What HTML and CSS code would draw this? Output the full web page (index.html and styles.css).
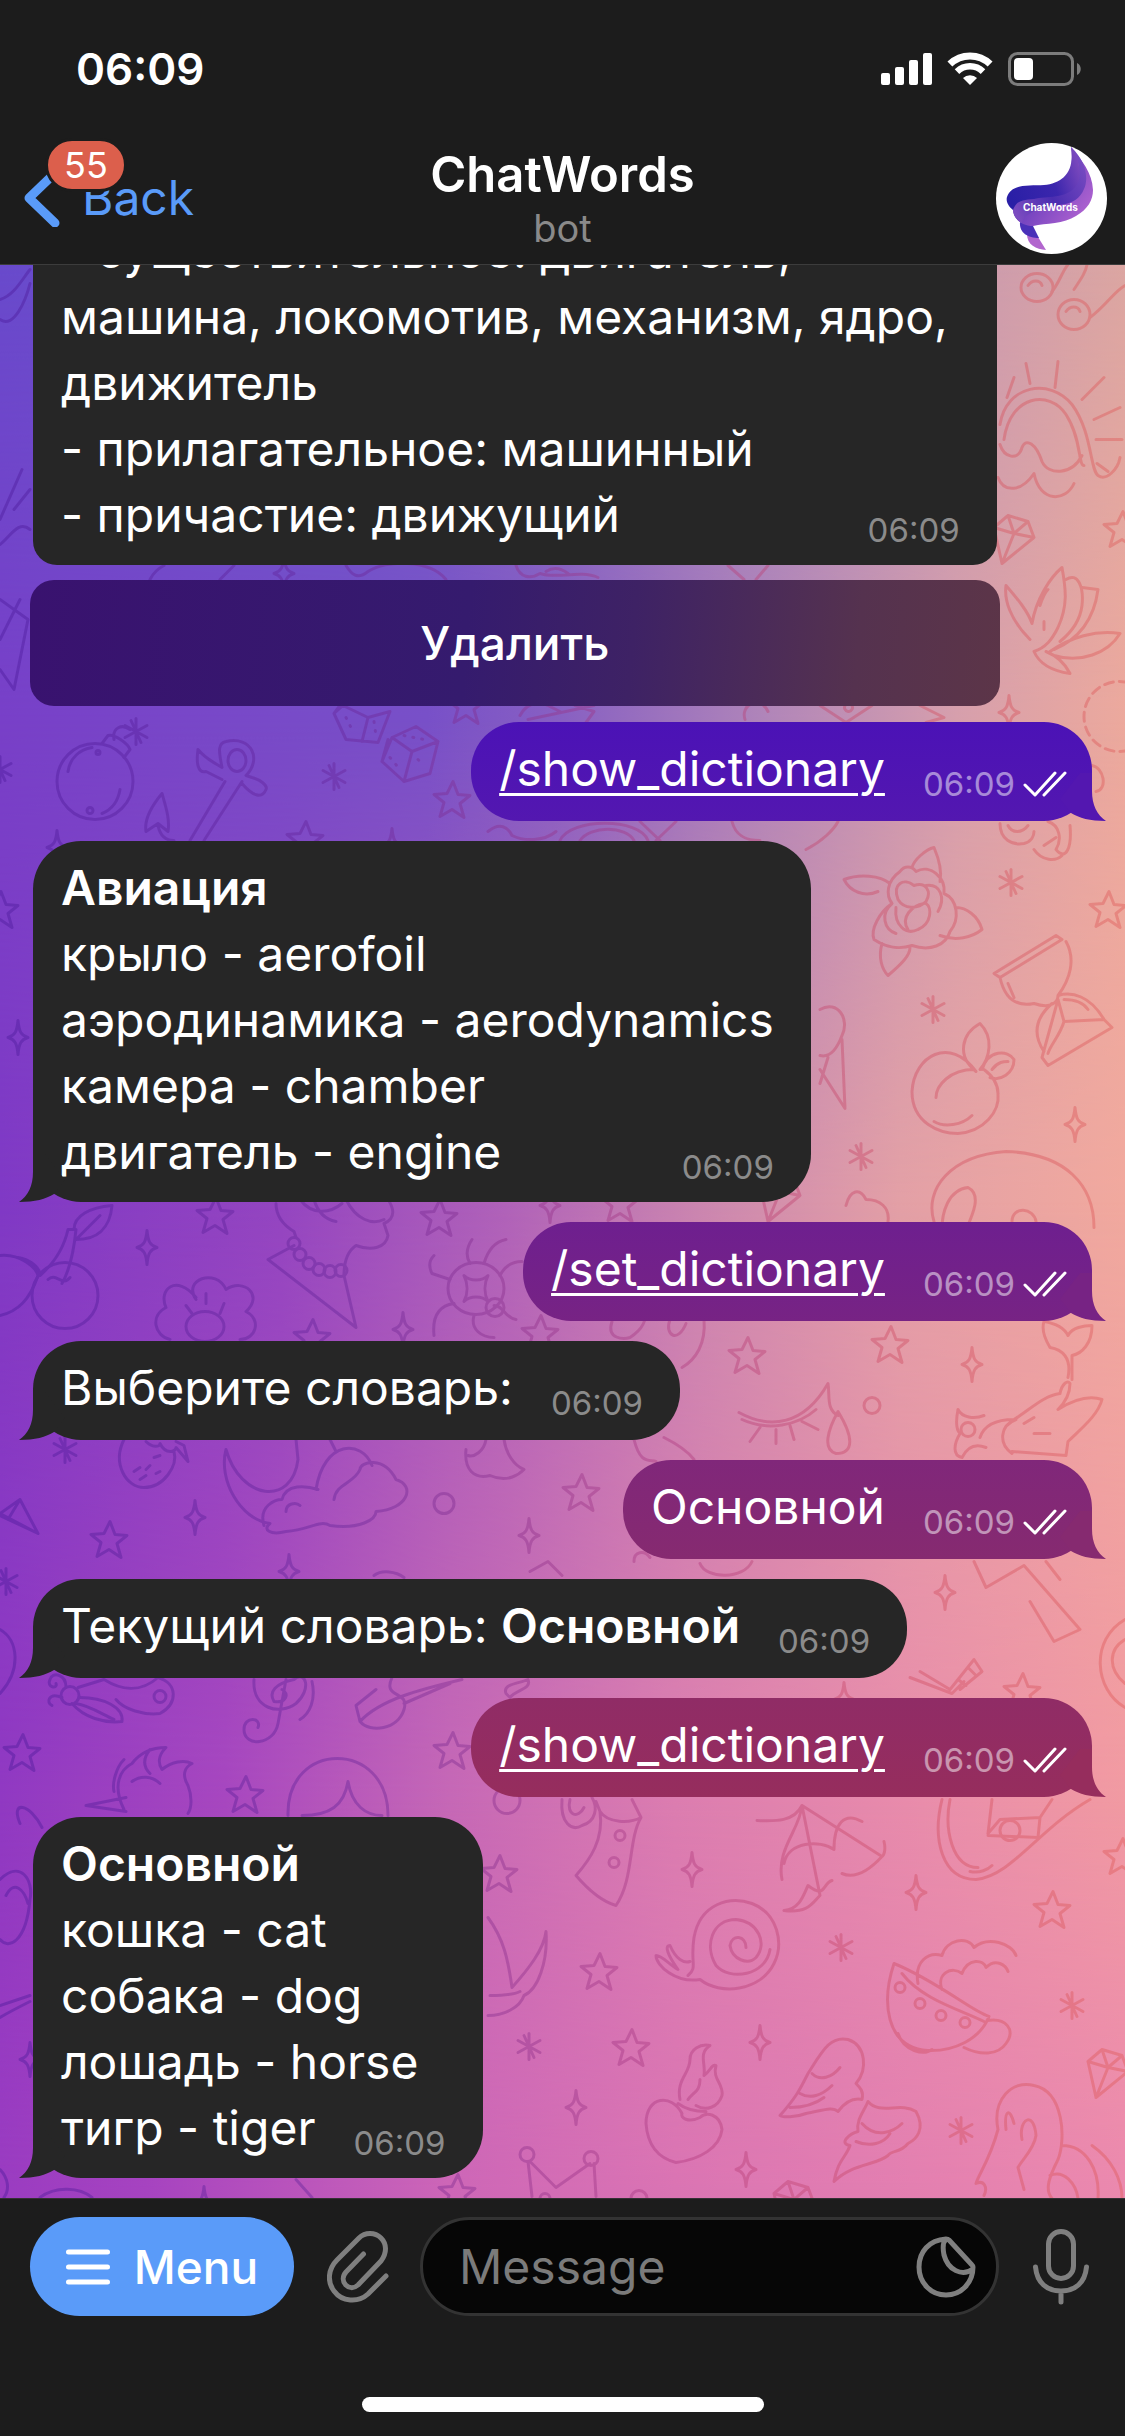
FILE: index.html
```html
<!DOCTYPE html>
<html lang="ru">
<head>
<meta charset="utf-8">
<meta name="viewport" content="width=device-width, initial-scale=1">
<title>ChatWords</title>
<link rel="stylesheet" href="styles.css">
</head>
<body>
<svg class="defs" width="0" height="0" aria-hidden="true">
  <defs>
    <symbol id="tail-right" viewBox="0 0 46 48"><path d="M20 0H32V18C32 32 37 42 46 48C30 48 19 45 11 40L0 26Z"/></symbol>
    <symbol id="tail-left" viewBox="0 0 46 48"><path d="M26 0H14V18C14 32 9 42 0 48C16 48 27 45 35 40L46 26Z"/></symbol>
    <symbol id="checks" viewBox="0 0 44 26"><path d="M2 14L12 24L32 2M21 24L42 2" fill="none" stroke="#fff" stroke-width="3" stroke-linecap="round" stroke-linejoin="round"/></symbol>
  </defs>
</svg>

<header class="top">
  <div class="status">
    <span class="clock">06:09</span>
    <div class="indicators">
      <svg width="51" height="32" viewBox="0 0 51 32" fill="#fff" aria-hidden="true">
        <rect x="0" y="20" width="9" height="12" rx="2"/><rect x="14" y="14" width="9" height="18" rx="2"/><rect x="28" y="7" width="9" height="25" rx="2"/><rect x="42" y="0" width="9" height="32" rx="2"/>
      </svg>
      <svg width="46" height="34" viewBox="0 0 46 34" fill="none" stroke="#fff" aria-hidden="true">
        <path d="M2.9 12.1A29 29 0 0 1 43.1 12.1" stroke-width="7"/><path d="M10 19.6A18.7 18.7 0 0 1 36 19.6" stroke-width="6.5"/><path d="M23 33L16 26A10 10 0 0 1 30 26Z" fill="#fff" stroke="none"/>
      </svg>
      <svg width="74" height="34" viewBox="0 0 74 34" aria-hidden="true">
        <rect x="1.5" y="1.5" width="63" height="31" rx="8" fill="none" stroke="#7c7c7c" stroke-width="3"/><rect x="6" y="6" width="19" height="22" rx="4" fill="#fff"/><path d="M69 11C74 13 74 21 69 23Z" fill="#7c7c7c"/>
      </svg>
    </div>
  </div>
  <div class="nav">
    <a class="back" href="#">
      <svg width="38" height="58" viewBox="0 0 38 58" fill="none" stroke="#5a9bf9" stroke-width="9" stroke-linecap="round" stroke-linejoin="round" aria-hidden="true"><path d="M31 4L5 29L31 54"/></svg>
      <span>Back</span>
      <b class="badge">55</b>
    </a>
    <div class="peer"><h1>ChatWords</h1><p>bot</p></div>
    <button class="avatar" aria-label="ChatWords">
      <svg width="111" height="111" viewBox="0 0 111 111" aria-hidden="true">
        <defs>
          <linearGradient id="av1" x1="0" y1=".6" x2="1" y2=".3"><stop offset="0" stop-color="#2a1fa6"/><stop offset=".6" stop-color="#3b26ad"/><stop offset="1" stop-color="#7a48bd"/></linearGradient>
          <linearGradient id="av2" x1="0" y1=".8" x2="1" y2=".2"><stop offset="0" stop-color="#7b4bc0"/><stop offset=".45" stop-color="#4a2db0"/><stop offset="1" stop-color="#7a4cc2"/></linearGradient>
          <linearGradient id="av3" x1="0" y1=".3" x2="1" y2="1"><stop offset="0" stop-color="#4a2eb4"/><stop offset="1" stop-color="#bd6ad4"/></linearGradient>
        </defs>
        <circle cx="55.500" cy="55.500" r="55.500" fill="#fff"/>
        <path d="M31 91C31 102 40 106 50 107L42 94Z" fill="#b266ce"/>
        <path d="M24 79C23 90 32 95 43 95L37 83Z" fill="#4a30b8"/>
        <path d="M17 66C17 76 26 83 37 83C50 80 68 81 80 73C92 66 97 57 97 47C96 29 86 18 75 4C79 28 70 44 50 52C34 56 20 56 17 66Z" fill="url(#av3)"/>
        <path d="M17 67C19 54 33 54 45 53C68 50 82 44 83 22L75 4C92 20 92 38 88 46C80 66 58 60 44 66C33 70 27 74 26 80C20 77 17 72 17 67Z" fill="url(#av2)"/>
        <path d="M17 67C11 62 10 57 11 54C16 40 34 43 48 42C66 40 79 30 75 4C85 18 86 36 80 43C71 56 50 53 38 56C26 57 20 58 17 67Z" fill="url(#av1)"/>
        <text x="27" y="68" class="logo-text">ChatWords</text>
      </svg>
    </button>
  </div>
</header>

<main class="chat">
  <svg class="wallpaper" viewBox="0 265 1125 1934" preserveAspectRatio="xMidYMid slice" aria-hidden="true">
    <defs>
      <linearGradient id="r0"><stop offset="0" stop-color="#694acc"/><stop offset=".3" stop-color="#6a58ca"/><stop offset=".5" stop-color="#8a68c2"/><stop offset=".75" stop-color="#b78fb8"/><stop offset=".89" stop-color="#cf9dac"/><stop offset="1" stop-color="#dca6a2"/></linearGradient>
      <linearGradient id="r1"><stop offset="0" stop-color="#7840c8"/><stop offset=".38" stop-color="#7850c8"/><stop offset=".5" stop-color="#8860c2"/><stop offset=".68" stop-color="#b085b9"/><stop offset=".85" stop-color="#d69fac"/><stop offset="1" stop-color="#eca99d"/></linearGradient>
      <linearGradient id="r2"><stop offset="0" stop-color="#8039c5"/><stop offset=".25" stop-color="#9445c1"/><stop offset=".45" stop-color="#b062b9"/><stop offset=".62" stop-color="#cb86b0"/><stop offset=".8" stop-color="#e3a0a6"/><stop offset="1" stop-color="#f1a99e"/></linearGradient>
      <linearGradient id="r3"><stop offset="0" stop-color="#9039c2"/><stop offset=".2" stop-color="#a747bf"/><stop offset=".4" stop-color="#c668b6"/><stop offset=".6" stop-color="#dc7db0"/><stop offset=".82" stop-color="#e98dab"/><stop offset="1" stop-color="#f19aa2"/></linearGradient>
      <linearGradient id="r4"><stop offset="0" stop-color="#9a3cc1"/><stop offset=".13" stop-color="#a643c0"/><stop offset=".4" stop-color="#cd66b7"/><stop offset=".6" stop-color="#da74b3"/><stop offset="1" stop-color="#eb89ae"/></linearGradient>
      <linearGradient id="v1" gradientUnits="userSpaceOnUse" x1="0" x2="0" y1="265" y2="720"><stop offset="0" stop-color="#000"/><stop offset="1" stop-color="#fff"/></linearGradient>
      <linearGradient id="v2" gradientUnits="userSpaceOnUse" x1="0" x2="0" y1="720" y2="1200"><stop offset="0" stop-color="#000"/><stop offset="1" stop-color="#fff"/></linearGradient>
      <linearGradient id="v3" gradientUnits="userSpaceOnUse" x1="0" x2="0" y1="1200" y2="1800"><stop offset="0" stop-color="#000"/><stop offset="1" stop-color="#fff"/></linearGradient>
      <linearGradient id="v4" gradientUnits="userSpaceOnUse" x1="0" x2="0" y1="1800" y2="2190"><stop offset="0" stop-color="#000"/><stop offset="1" stop-color="#fff"/></linearGradient>
      <g id="area"><rect y="265" width="1125" height="1934"/></g>
      <mask id="m1"><use href="#area" fill="url(#v1)"/></mask>
      <mask id="m2"><use href="#area" fill="url(#v2)"/></mask>
      <mask id="m3"><use href="#area" fill="url(#v3)"/></mask>
      <mask id="m4"><use href="#area" fill="url(#v4)"/></mask>
      <linearGradient id="ink"><stop offset="0" stop-color="#4c1a9c"/><stop offset=".3" stop-color="#66259a"/><stop offset=".6" stop-color="#b03a80"/><stop offset=".8" stop-color="#d04c62"/><stop offset="1" stop-color="#e05a58"/></linearGradient>
      <path id="st" d="M1 -18L6 -5L18 -4L8 4L12 18L0 10L-12 17L-8 3L-18 -5L-5 -6Z"/>
      <path id="sp" d="M0 -17C1 -6 3 -2 10 0C3 2 1 6 0 17C-1 6 -3 2 -10 0C-3 -2 -1 -6 0 -17Z"/>
      <path id="as" d="M0 -13V13M-11 -6L11 6M-11 6L11 -6M-5 -11L5 11"/>
      <path id="gem" d="M-20 -12L-6 -24L14 -18L20 -2L-12 24ZM-20 -12L0 -6L20 -2M-6 -24L0 -6L-12 24M14 -18L0 -6"/>
      <mask id="doodles" maskUnits="userSpaceOnUse" x="0" y="265" width="1125" height="1934">
        <g fill="none" stroke="#fff" stroke-width="3" stroke-linejoin="round" stroke-linecap="round">
          <use href="#st" x="452" y="800"/><use href="#st" x="1108" y="910"/><use href="#st" x="305" y="840"/><use href="#st" x="466" y="706"/>
          <use href="#st" x="215" y="1216"/><use href="#st" x="439" y="1218"/><use href="#st" x="620" y="1204"/><use href="#st" x="312" y="1338"/><use href="#st" x="747" y="1356"/><use href="#st" x="890" y="1345"/><use href="#st" x="540" y="1334"/><use href="#st" x="581" y="1493"/><use href="#st" x="109" y="1540"/><use href="#st" x="22" y="1753"/><use href="#st" x="245" y="1795"/><use href="#st" x="452" y="1751"/><use href="#st" x="1022" y="1692"/><use href="#st" x="499" y="1874"/><use href="#st" x="599" y="1972"/><use href="#st" x="631" y="2048"/><use href="#st" x="1052" y="1910"/><use href="#st" x="457" y="2193"/><use href="#st" x="1122" y="1857"/><use href="#st" x="0" y="910"/><use href="#st" x="1122" y="530"/>
          <use href="#sp" x="18" y="1038"/><use href="#sp" x="1075" y="1125"/><use href="#sp" x="57" y="848"/><use href="#sp" x="1009" y="713"/><use href="#sp" x="147" y="1248"/><use href="#sp" x="550" y="1206"/><use href="#sp" x="403" y="1330"/><use href="#sp" x="972" y="1365"/><use href="#sp" x="195" y="1518"/><use href="#sp" x="529" y="1536"/><use href="#sp" x="945" y="1593"/><use href="#sp" x="289" y="1572"/><use href="#sp" x="692" y="1870"/><use href="#sp" x="916" y="1893"/><use href="#sp" x="760" y="2043"/><use href="#sp" x="576" y="2108"/><use href="#sp" x="746" y="2170"/><use href="#sp" x="204" y="2204"/><use href="#sp" x="284" y="574"/><use href="#sp" x="844" y="1700"/><use href="#sp" x="30" y="2060"/><use href="#sp" x="392" y="846"/>
          <use href="#as" x="334" y="777"/><use href="#as" x="1011" y="883"/><use href="#as" x="933" y="1010"/><use href="#as" x="861" y="1157"/><use href="#as" x="0" y="770"/><use href="#as" x="136" y="732"/><use href="#as" x="65" y="1450"/><use href="#as" x="6" y="1582"/><use href="#as" x="841" y="1948"/><use href="#as" x="529" y="2047"/><use href="#as" x="1072" y="2006"/><use href="#as" x="961" y="2131"/>
          <use href="#gem" x="1014" y="540"/><use href="#gem" x="1108" y="2074"/><use href="#gem" x="780" y="1198"/><use href="#gem" x="794" y="2206"/>
          <circle cx="444" cy="1504" r="10"/><circle cx="872" cy="1406" r="8"/><circle cx="507" cy="1801" r="13"/>
          <!-- sun behind a cloud, notes -->
          <path d="M1000 425C1006 385 1050 378 1072 405C1092 432 1090 470 1098 476C1106 482 1118 470 1120 458M1004 440C1010 395 1050 390 1066 415C1082 440 1078 466 1084 466M1007 398L1014 378M1055 388L1058 362M1082 400L1104 378M1094 420L1120 408M1096 440L1122 440M1097 464L1108 472M1030 384L1026 364M1000 445C1004 458 1018 462 1022 448C1026 438 1036 444 1042 462C1048 476 1072 476 1082 456M998 478C1004 494 1022 492 1034 474C1040 504 1066 502 1074 484"/>
          <ellipse cx="1037" cy="288" rx="16" ry="14"/><ellipse cx="1074" cy="315" rx="16" ry="15"/><path d="M1028 286C1032 280 1040 280 1042 286M1066 312C1070 306 1078 306 1080 312M1052 292C1060 282 1062 272 1068 265M1090 318C1106 306 1116 290 1125 286M1074 290C1082 278 1086 272 1087 265"/>
          <!-- lotus -->
          <path d="M1030 640C1010 620 1004 600 1006 586C1018 600 1028 612 1032 624C1036 600 1050 578 1062 568C1066 590 1068 606 1058 628C1052 640 1046 648 1034 652M1066 580C1078 572 1084 588 1082 606C1080 622 1070 634 1060 642M1082 588L1098 590C1094 620 1078 640 1054 650M1050 652C1070 638 1096 630 1120 634C1108 654 1080 664 1054 656M1034 652C1040 666 1056 672 1070 674C1064 662 1056 656 1046 652M1040 606C1042 600 1044 594 1048 590M1044 622V630"/>
          <circle cx="1119" cy="717" r="35" stroke-dasharray="9 6"/>
          <path d="M1092 766C1104 768 1108 790 1096 792M1000 824C1000 840 1012 846 1024 844C1032 842 1034 836 1034 832M1008 826C1012 834 1022 834 1028 826M1048 822C1060 826 1062 840 1056 850C1066 862 1072 848 1070 826M1044 846L1056 838M1034 850C1042 862 1056 862 1062 856"/>
          <!-- shapes between the first message and its button -->
          <path d="M150 580C154 572 160 568 164 566M220 580L234 566M346 566C352 576 358 580 368 572C386 560 430 560 446 580M516 566C520 578 530 580 540 574C556 580 580 570 598 578M546 572C552 568 560 568 568 574M728 566L744 580M756 580L768 566"/>
          <path d="M0 300C14 296 22 280 30 270M0 320C14 330 26 300 30 284M0 520L22 470M14 510L30 490M0 545C10 538 18 520 30 530M0 600L28 620L14 690L0 670M0 640L20 600"/>
          <path d="M520 716C526 704 540 700 548 706L560 712M528 720L594 706M575 706L594 712L586 723M745 720C740 705 760 695 768 712M820 706L846 723L872 706M920 706L944 718L926 723M848 712A4 4 0 1 1 849 712"/>
          <!-- bomb -->
          <circle cx="95" cy="782" r="38"/><path d="M102 744L108 736C114 734 128 744 130 750L124 758M114 740C112 728 122 724 130 730M68 772C70 758 80 750 92 748M102 814C112 810 118 802 120 790"/><circle cx="98" cy="753" r="2"/><circle cx="90" cy="811" r="3"/>
          <!-- anchor -->
          <path d="M225 782L190 841M242 782L204 841M198 750C206 760 216 764 222 768C220 756 216 744 226 742C252 736 262 760 246 776L252 778C260 780 268 786 266 790C262 800 252 796 242 784M198 750C196 764 198 774 206 772L222 780M162 794C152 806 144 820 146 832L158 824L168 832C170 820 166 808 162 794ZM158 826C160 836 166 841 174 841"/><ellipse cx="237" cy="761" rx="9" ry="11"/>
          <!-- dice -->
          <path d="M343 706L368 718L390 712L378 743L346 740L334 714ZM368 718L362 742M340 706L334 714M392 738L416 727L438 742L430 774L404 782L382 762ZM392 738L412 752L438 742M412 752L404 782M382 762L388 740"/><g stroke-dasharray="1 8"><path d="M346 718L354 734M374 722L376 736M390 758L400 770M418 760L424 766M404 736L424 740"/></g>
          <path d="M488 832C500 822 508 828 512 836C524 842 544 842 556 832M560 841C570 818 640 818 648 841M580 841C590 826 626 826 634 841M640 822L660 841M676 822L656 841M732 822C736 838 748 841 760 841M806 850C822 842 834 830 838 822"/>
          <!-- rose -->
          <path d="M900 872C886 882 886 896 892 904C880 912 870 930 874 940C886 948 900 950 912 946C930 952 946 946 950 932C960 920 958 900 944 894C946 878 930 864 916 872C912 866 904 866 900 872ZM898 900C892 884 904 878 914 886C926 882 932 892 926 902C918 910 904 910 898 900ZM896 908C894 926 906 936 918 930C932 924 932 908 926 904M908 930C900 918 912 906 924 904M892 904C880 914 884 930 896 934M926 886C940 884 946 898 938 912M878 892C864 898 850 892 844 880C860 874 880 876 890 884M912 868C914 860 926 850 934 848C940 862 942 872 940 882M940 936C956 942 972 938 982 930C978 916 966 908 956 908M882 944C878 958 882 970 888 976C902 964 910 956 910 948"/>
          <!-- hourglass -->
          <path d="M1056 936L1062 940L1000 978L994 974ZM1000 978C1004 996 1014 1008 1034 1004C1052 1010 1058 1002 1058 996C1070 980 1076 960 1066 942M1058 996C1072 992 1090 996 1104 1020M1052 1004C1036 1018 1032 1034 1044 1052M1058 1000L1064 1022L1104 1020L1112 1028L1048 1066L1042 1058ZM1064 1022C1060 1036 1050 1046 1048 1054M1064 1000C1076 1000 1084 1004 1088 1010M1008 984L1014 998"/>
          <!-- peach -->
          <path d="M976 1072C950 1036 914 1056 912 1092C912 1124 940 1134 958 1134C984 1132 1000 1112 998 1094C998 1084 992 1076 984 1070M974 1070C950 1070 936 1086 936 1098M976 1072C956 1056 962 1034 980 1024C994 1038 990 1058 980 1070M982 1070C988 1050 1008 1050 1014 1060C1014 1074 1000 1082 990 1078M992 1070C998 1062 1004 1062 1008 1062M934 1122C944 1128 962 1126 972 1116"/>
          <path d="M820 1010C838 1000 850 1020 842 1036C836 1052 828 1058 820 1056M828 1058L820 1084M842 1040L845 1109L820 1070"/>
          <path d="M934 1222C924 1190 950 1156 1006 1152C1066 1154 1094 1186 1094 1228M942 1240C940 1210 950 1190 968 1188C984 1196 970 1220 962 1240M846 1206C850 1190 860 1188 866 1200C880 1200 890 1208 888 1222M1012 1222C1012 1206 1034 1208 1036 1222"/>
          <!-- cherries -->
          <circle cx="65" cy="1296" r="33"/><path d="M48 1280C56 1272 62 1288 70 1278M0 1256C20 1254 36 1268 38 1276C30 1300 18 1312 0 1316M18 1258C30 1260 40 1268 40 1276C56 1262 64 1248 68 1230L76 1230C74 1250 70 1270 62 1284M74 1230C74 1216 90 1208 112 1206C110 1230 96 1240 76 1240L100 1216"/>
          <!-- flower -->
          <ellipse cx="205" cy="1327" rx="19" ry="15"/><path d="M196 1300C182 1280 216 1268 226 1290C244 1278 264 1296 246 1312C262 1320 256 1340 240 1340M196 1298C176 1274 158 1290 166 1308C150 1316 154 1336 170 1340M206 1294V1304M186 1306L192 1314M224 1304L220 1314"/>
          <!-- portrait bust -->
          <path d="M276 1204C276 1218 284 1226 294 1232L296 1238M300 1200C312 1216 330 1214 342 1204M314 1200C318 1214 326 1220 336 1222M346 1200C356 1220 372 1226 384 1220M294 1246L268 1260L356 1328L344 1276C344 1258 350 1250 356 1246C372 1252 386 1248 388 1236L384 1224C398 1218 392 1206 388 1200"/><g><circle cx="294" cy="1244" r="6"/><circle cx="300" cy="1255" r="6"/><circle cx="309" cy="1264" r="6"/><circle cx="319" cy="1270" r="6"/><circle cx="330" cy="1272" r="6"/><circle cx="341" cy="1271" r="6"/></g>
          <!-- beetle -->
          <ellipse cx="476" cy="1289" rx="28" ry="26"/><path d="M464 1276C470 1282 482 1282 488 1276C484 1284 484 1294 488 1302C482 1296 470 1296 464 1302C468 1294 468 1284 464 1276ZM450 1280L432 1274C428 1266 430 1260 434 1256M470 1264C464 1254 468 1246 472 1240M484 1264C488 1250 496 1242 506 1240M500 1276C506 1264 516 1262 522 1262M454 1304C440 1306 432 1316 434 1336M474 1316C470 1330 482 1338 494 1338M494 1306C504 1306 504 1318 516 1320"/><circle cx="495" cy="1308" r="9"/>
          <path d="M612 1322C606 1340 624 1340 630 1338C642 1330 648 1320 644 1310M670 1320C664 1336 678 1344 686 1324M704 1320C706 1344 696 1360 682 1368"/>
          <!-- closed eye with a tear -->
          <path d="M739 1413C770 1430 804 1426 828 1384C830 1396 826 1410 838 1416M742 1420C768 1432 798 1426 816 1410M760 1428L750 1442M776 1430V1444M790 1426L794 1440M802 1422L818 1430M838 1412C828 1430 822 1450 836 1454C854 1454 854 1438 838 1412Z"/>
          <!-- fish tail and hand bell -->
          <path d="M1068 1378C1072 1358 1062 1350 1050 1348C1044 1338 1042 1328 1044 1322C1056 1324 1064 1328 1068 1336C1072 1328 1084 1326 1092 1326C1092 1344 1082 1354 1072 1356V1380M1060 1394C1044 1396 1030 1410 1014 1420C996 1420 984 1426 980 1438M1060 1394C1062 1384 1068 1380 1070 1384C1070 1396 1064 1404 1058 1410M1058 1410C1074 1400 1090 1396 1102 1400C1098 1416 1080 1430 1068 1442L1066 1456L1012 1452M958 1410C962 1418 974 1420 984 1416M958 1410C956 1420 956 1430 960 1434C954 1444 952 1456 962 1458C968 1446 976 1444 986 1448M1016 1420C1000 1426 998 1444 1012 1454M1024 1424L1034 1418M1034 1434H1050"/><circle cx="968" cy="1430" r="7"/>
          <!-- moon and cloud -->
          <path d="M226 1450C218 1480 240 1520 270 1524C262 1530 270 1536 286 1532C310 1530 320 1520 330 1526C360 1530 376 1520 376 1512C408 1510 416 1486 396 1480C384 1456 360 1462 360 1470C354 1484 336 1484 334 1500M226 1450C240 1500 292 1508 298 1460L296 1440M316 1490C324 1440 362 1440 372 1466M264 1526C258 1506 276 1500 282 1500C286 1484 306 1486 318 1490M330 1440L336 1452M286 1512C286 1504 296 1502 300 1506"/>
          <!-- strawberry -->
          <path d="M124 1440C112 1464 126 1488 144 1488C164 1488 178 1466 174 1452M146 1442C152 1448 160 1448 160 1444C166 1456 176 1452 176 1448L188 1462L184 1446L176 1442"/><path d="M134 1472L140 1468M146 1470L150 1466M140 1480L146 1476M156 1474L160 1472M154 1458L160 1456" />
          <path d="M0 1514L20 1500L38 1534ZM0 1516L38 1534M8 1520L20 1500"/>
          <path d="M466 1450C464 1470 474 1480 490 1476C508 1484 520 1474 524 1470C514 1466 506 1454 504 1440M486 1440C484 1452 474 1458 468 1456M634 1440C640 1464 648 1460 656 1462M664 1438C680 1446 688 1452 694 1460M634 1562C634 1552 644 1550 650 1558M700 1564C706 1580 744 1580 752 1562M530 1572L548 1562L562 1576M374 1576C382 1570 396 1572 404 1578"/>
          <path d="M974 1562L986 1588L1024 1566L1080 1630L1054 1642L1030 1602M1046 1562L1060 1580"/>
          <path d="M0 1630C18 1640 22 1670 0 1694M1125 1620C1090 1640 1094 1690 1125 1708M1125 1640C1108 1650 1108 1670 1125 1684"/>
          <!-- butterfly -->
          <circle cx="70" cy="1696" r="9"/><path d="M66 1688C66 1674 52 1672 50 1680C46 1688 58 1690 56 1684M62 1698C48 1692 46 1704 52 1706M78 1688L104 1680C120 1690 140 1694 158 1678C178 1684 178 1704 160 1714C144 1716 124 1710 116 1700M72 1704C84 1718 104 1724 122 1722C124 1708 104 1698 80 1698M76 1704C90 1706 104 1716 114 1720"/><circle cx="160" cy="1697" r="6"/>
          <!-- treble clef -->
          <path d="M254 1680C252 1710 280 1716 296 1704C312 1690 306 1670 294 1680C276 1684 268 1692 274 1702C286 1704 290 1694 282 1690M286 1680L278 1724C274 1746 244 1748 244 1730C244 1716 262 1718 258 1728M300 1720C310 1714 316 1700 312 1682"/>
          <!-- ribbon and pencil -->
          <path d="M392 1678C382 1700 410 1690 404 1710C398 1730 370 1734 360 1722C380 1700 420 1690 462 1680M360 1722L356 1706L376 1690M404 1704L450 1684M506 1694C502 1684 520 1684 528 1680C532 1690 516 1690 510 1698Z"/>
          <!-- key -->
          <path d="M910 1678L952 1694L964 1682M920 1672L950 1690L974 1660L982 1672L960 1690M958 1680L966 1686M968 1668L976 1676"/>
          <!-- unicorn -->
          <path d="M124 1810C112 1786 120 1770 132 1764C138 1756 148 1748 166 1748C158 1756 158 1764 162 1770C172 1762 184 1760 192 1764C184 1768 182 1776 188 1786C192 1796 192 1808 188 1814M86 1806L126 1798M86 1806L126 1812M124 1760C116 1768 112 1784 114 1792M150 1750C142 1760 144 1768 150 1774M132 1782C140 1776 152 1776 160 1784"/>
          <path d="M288 1816C286 1740 388 1740 388 1816M302 1816C330 1816 344 1806 348 1782C352 1806 366 1816 382 1816"/>
          <path d="M20 1824C10 1800 30 1804 42 1828M0 1880C20 1860 34 1880 30 1900C26 1944 8 1950 0 1940M6 1896C14 1880 24 1890 28 1904M0 2006L30 1996M0 2018C10 2012 22 2006 30 2002M0 2170C8 2178 10 2190 4 2198M40 2198C56 2186 80 2188 92 2198M296 2180L312 2198"/>
          <!-- tie -->
          <path d="M562 1800C560 1824 572 1832 582 1826C596 1822 598 1808 592 1798M570 1800C566 1816 578 1820 584 1808M596 1802L600 1812C608 1824 630 1824 641 1818L632 1800M600 1812C604 1840 590 1860 576 1876C588 1890 602 1902 616 1906C634 1880 628 1840 641 1818"/><circle cx="620" cy="1836" r="5"/><circle cx="614" cy="1863" r="5"/>
          <!-- bow -->
          <path d="M802 1806C794 1822 776 1822 757 1821M802 1806C800 1830 776 1850 782 1880M802 1806L882 1857C870 1870 856 1880 842 1874M802 1806L820 1896C812 1904 808 1914 784 1911C800 1910 804 1894 808 1886C826 1900 822 1884 832 1881M862 1822C844 1812 834 1824 834 1850C820 1840 788 1842 784 1864M884 1842C886 1850 884 1856 882 1857"/>
          <!-- banjo -->
          <path d="M942 1800C932 1840 942 1880 976 1880C1012 1876 1038 1830 1090 1800M950 1800C944 1830 952 1868 978 1868M988 1834L1000 1820L1040 1818L1038 1838L988 1836M970 1872C980 1874 988 1870 992 1866M988 1834L992 1800M1040 1818L1052 1800"/><circle cx="1010" cy="1831" r="10"/>
          <path d="M488 1918C504 1940 508 1960 512 1988C528 1970 544 1950 546 1932C548 1962 538 1990 524 1996C520 2008 504 2016 488 2016M490 1996C500 1996 512 1996 520 1992"/>
          <!-- snail -->
          <path d="M688 1976C698 1968 690 1964 694 1938C700 1904 730 1896 752 1904C778 1914 784 1944 774 1964C760 1992 720 1996 700 1980C676 1984 656 1966 656 1956C662 1956 668 1964 678 1970C668 1956 664 1946 670 1946C676 1960 684 1964 690 1962M770 1950C766 1976 730 1982 716 1966C704 1946 712 1920 736 1920C758 1922 768 1944 756 1958C748 1966 732 1960 730 1946C732 1934 746 1936 746 1948"/>
          <!-- cup -->
          <path d="M894 1964C882 2000 884 2048 928 2051C954 2052 980 2040 989 2017C972 2012 938 1982 894 1964ZM902 1974C922 2000 960 2010 984 2022M987 2021C1006 2018 1016 2030 1006 2044C998 2056 980 2056 964 2048M898 2034C904 2052 924 2056 932 2050M918 1984C914 1962 928 1952 942 1956C946 1940 968 1936 974 1948C988 1936 1012 1944 1016 1956M942 1990C936 1974 952 1966 962 1974C968 1958 984 1960 986 1968C996 1958 1006 1966 1008 1972"/><circle cx="900" cy="1988" r="5"/><circle cx="920" cy="2004" r="5"/><circle cx="941" cy="2016" r="5"/><circle cx="965" cy="2023" r="5"/>
          <!-- burning heart -->
          <path d="M682 2114C672 2094 646 2096 646 2124C648 2152 664 2160 676 2163C700 2160 720 2148 722 2130C720 2114 706 2112 700 2118C688 2124 680 2118 682 2114ZM678 2104C686 2110 698 2112 706 2112M680 2100C676 2080 690 2074 690 2060C690 2050 700 2044 710 2046C698 2054 706 2064 704 2076C710 2072 712 2064 716 2066C712 2080 724 2084 722 2096C718 2108 706 2112 696 2106M688 2100C694 2092 700 2092 700 2080"/>
          <!-- wings -->
          <path d="M808 2074C822 2052 830 2036 848 2040C866 2046 868 2070 856 2084C860 2088 864 2092 862 2100C852 2098 844 2104 838 2112C832 2106 820 2112 806 2114C796 2118 782 2118 780 2116C796 2098 800 2090 808 2074ZM812 2074C820 2082 832 2078 840 2068M800 2094C810 2100 822 2096 832 2086M790 2108C804 2108 816 2104 824 2098M868 2102C880 2116 900 2102 916 2112C926 2130 916 2140 908 2144C900 2154 892 2150 888 2156C876 2166 852 2164 834 2182C838 2160 846 2158 850 2146C838 2144 850 2134 858 2132C856 2120 864 2112 868 2102ZM862 2124C876 2140 894 2132 902 2124M856 2142C870 2148 884 2144 890 2134"/>
          <!-- girl -->
          <path d="M998 2130C992 2100 1012 2080 1034 2086C1064 2092 1066 2140 1058 2160C1050 2176 1044 2190 1052 2199M1006 2130C1004 2110 1010 2108 1014 2124M1022 2140C1018 2120 1034 2110 1036 2136C1034 2150 1022 2160 1018 2168L1024 2190M998 2130C990 2160 978 2176 976 2184C984 2180 988 2188 984 2196M1062 2146C1086 2146 1100 2170 1098 2199M1092 2146C1112 2160 1122 2180 1122 2199M1050 2176C1064 2170 1076 2184 1078 2199"/>
          <!-- crown -->
          <path d="M532 2197L528 2162M530 2162L556 2188L590 2164M594 2164L596 2197"/><circle cx="527" cy="2155" r="7"/><circle cx="591" cy="2159" r="7"/><circle cx="545" cy="2199" r="5"/><circle cx="639" cy="2199" r="8"/>
        </g>
      </mask>
    </defs>
    <use href="#area" fill="url(#r0)"/>
    <g mask="url(#m1)"><use href="#area" fill="url(#r1)"/></g>
    <g mask="url(#m2)"><use href="#area" fill="url(#r2)"/></g>
    <g mask="url(#m3)"><use href="#area" fill="url(#r3)"/></g>
    <g mask="url(#m4)"><use href="#area" fill="url(#r4)"/></g>
    <g mask="url(#doodles)" opacity=".42"><use href="#area" fill="url(#ink)"/></g>
  </svg>

  <article class="bubble in attached">
    <p>- существительное: двигатель,<br>машина, локомотив, механизм, ядро,<br>движитель<br>- прилагательное: машинный</p>
    <div class="last"><span>- причастие: движущий</span><time>06:09</time></div>
  </article>
  <button class="inline-key">Удалить</button>

  <article class="bubble out single tone-1">
    <div class="last"><a href="#">/show_dictionary</a><span class="meta"><time>06:09</time><svg width="44" height="26" aria-label="Прочитано"><use href="#checks"/></svg></span></div>
    <svg class="tail" width="46" height="48" aria-hidden="true"><use href="#tail-right"/></svg>
  </article>

  <article class="bubble in">
    <p><b>Авиация</b><br>крыло - aerofoil<br>аэродинамика - aerodynamics<br>камера - chamber</p>
    <div class="last"><span>двигатель - engine</span><time>06:09</time></div>
    <svg class="tail" width="46" height="48" aria-hidden="true"><use href="#tail-left"/></svg>
  </article>

  <article class="bubble out single tone-2">
    <div class="last"><a href="#">/set_dictionary</a><span class="meta"><time>06:09</time><svg width="44" height="26" aria-label="Прочитано"><use href="#checks"/></svg></span></div>
    <svg class="tail" width="46" height="48" aria-hidden="true"><use href="#tail-right"/></svg>
  </article>

  <article class="bubble in single">
    <div class="last"><span>Выберите словарь:</span><time>06:09</time></div>
    <svg class="tail" width="46" height="48" aria-hidden="true"><use href="#tail-left"/></svg>
  </article>

  <article class="bubble out single tone-3">
    <div class="last"><span>Основной</span><span class="meta"><time>06:09</time><svg width="44" height="26" aria-label="Прочитано"><use href="#checks"/></svg></span></div>
    <svg class="tail" width="46" height="48" aria-hidden="true"><use href="#tail-right"/></svg>
  </article>

  <article class="bubble in single">
    <div class="last"><span>Текущий словарь: <b>Основной</b></span><time>06:09</time></div>
    <svg class="tail" width="46" height="48" aria-hidden="true"><use href="#tail-left"/></svg>
  </article>

  <article class="bubble out single tone-4">
    <div class="last"><a href="#">/show_dictionary</a><span class="meta"><time>06:09</time><svg width="44" height="26" aria-label="Прочитано"><use href="#checks"/></svg></span></div>
    <svg class="tail" width="46" height="48" aria-hidden="true"><use href="#tail-right"/></svg>
  </article>

  <article class="bubble in">
    <p><b>Основной</b><br>кошка - cat<br>собака - dog<br>лошадь - horse</p>
    <div class="last"><span>тигр - tiger</span><time>06:09</time></div>
    <svg class="tail" width="46" height="48" aria-hidden="true"><use href="#tail-left"/></svg>
  </article>
</main>

<footer class="composer">
  <div class="tools">
    <button class="menu">
      <svg width="44" height="36" viewBox="0 0 44 36" stroke="#fff" stroke-width="5" stroke-linecap="round" aria-hidden="true"><path d="M2.500 3H41.500M2.500 18H41.500M2.500 33H41.500"/></svg>
      <span>Menu</span>
    </button>
    <button class="icon clip" aria-label="Attach">
      <svg width="62" height="72" viewBox="0 0 62 72" fill="none" stroke="#7f7f7f" stroke-width="5" stroke-linecap="round" stroke-linejoin="round" aria-hidden="true"><path d="M36.500 23L19 41C11 50 22 62 31 54L54 30C60 22 60 13 54 7C48 1 38 1 32 7L10 29C1 38 0 51 7 60C15 71 31 72 41 63L59 45"/></svg>
    </button>
    <div class="field">
      <input type="text" placeholder="Message" aria-label="Message">
      <button class="icon" aria-label="Stickers">
        <svg width="60" height="62" viewBox="0 0 60 62" fill="none" stroke="#7f7f7f" stroke-width="5" stroke-linejoin="round" aria-hidden="true"><path d="M30 3C13 4 3 16 3 31C3 47 15 59 30 59C45 59 57 47 57 31C57 30 57 30 56 29L33 4C32 3 31 3 30 3ZM30 3C26 7 27 14 28 19C32 34 46 41 57 33"/></svg>
      </button>
    </div>
    <button class="icon mic" aria-label="Voice message">
      <svg width="56" height="76" viewBox="0 0 56 76" fill="none" stroke="#7f7f7f" stroke-width="5" stroke-linecap="round" aria-hidden="true"><rect x="15.500" y="2.500" width="25" height="47" rx="12.500"/><path d="M2.500 38C4 54 14 62 28 62C42 62 52 54 53.500 38M28 62V73"/></svg>
    </button>
  </div>
  <div class="home-bar"></div>
</footer>
</body>
</html>
```
FILE: styles.css
```css
* {
  box-sizing: border-box;
}

body {
  margin: 0;
  height: 100vh;
  display: flex;
  flex-direction: column;
  background: #1c1c1c;
  color: #fff;
  font-family: Inter, "Liberation Sans", sans-serif;
  font-size: 48px;
  line-height: 66px;
}

h1,
p {
  margin: 0;
}

button {
  border: 0;
  padding: 0;
  background: none;
  color: inherit;
  font: inherit;
}

svg {
  display: block;
  flex: none;
}

.defs {
  position: absolute;
}

/* Header */
.top {
  flex: none;
  background: #1c1c1c;
  border-bottom: 1px solid #3c3c3c;
}

.status {
  display: flex;
  justify-content: space-between;
  align-items: center;
  height: 132px;
  padding: 6px 43px 0 76px;
}

.clock {
  font-size: 44px;
  font-weight: 600;
}

.indicators {
  display: flex;
  align-items: center;
  gap: 15px;
}

.nav {
  display: grid;
  grid-template-columns: 1fr auto 1fr;
  align-items: center;
  height: 132px;
  padding: 0 18px;
}

.back {
  position: relative;
  display: flex;
  align-items: center;
  justify-self: start;
  gap: 20px;
  margin-left: 6px;
  color: #5a9bf9;
  text-decoration: none;
}

.badge {
  position: absolute;
  left: 21px;
  top: -27px;
  border: 3px solid #1c1c1c;
  border-radius: 28px;
  padding: 0 16px;
  background: #dc5f4c;
  color: #fff;
  font-size: 36px;
  font-weight: 400;
  line-height: 48px;
}

.peer {
  text-align: center;
}

.peer h1 {
  font-size: 49px;
  font-weight: 600;
  line-height: 60px;
}

.peer p {
  color: #8a8a8a;
  font-size: 38px;
  line-height: 46px;
}

.avatar {
  justify-self: end;
}

.logo-text {
  fill: #fff;
  font-size: 10px;
  font-weight: 700;
}

/* Conversation */
.chat {
  position: relative;
  flex: 1 1 0;
  min-height: 0;
  overflow: hidden;
  display: flex;
  flex-direction: column;
  justify-content: flex-end;
  gap: 20px;
  padding: 0 33px 20px;
}

.wallpaper {
  position: absolute;
  left: 0;
  top: 0;
  width: 100%;
  height: 100%;
}

.bubble {
  position: relative;
  flex: none;
  max-width: 92%;
  border-radius: 48px;
  padding: 14px 37px 17px 28px;
}

.in {
  align-self: flex-start;
  background: #262626;
  fill: #262626;
}

.out {
  align-self: flex-end;
  padding-right: 25px;
}

.single {
  padding-bottom: 19px;
}

.attached {
  width: 91%;
  margin-bottom: -5px;
  border-radius: 24px;
}

.last {
  display: flex;
  justify-content: space-between;
  align-items: flex-end;
  gap: 38px;
}

.bubble b {
  font-weight: 600;
}

.bubble a {
  color: #fff;
  text-decoration-thickness: 3px;
  text-underline-offset: 7px;
}

time {
  color: #8b8b8b;
  font-size: 33px;
  line-height: 36px;
}

.meta {
  display: flex;
  align-items: center;
  gap: 8px;
}

.out time {
  color: rgba(255, 255, 255, .5);
}

.tail {
  position: absolute;
  bottom: 0;
}

.in .tail {
  left: -14px;
}

.out .tail {
  right: -14px;
}

.tone-1 {
  background: linear-gradient(#4b12b6, #5317b0);
  fill: #5317b0;
}

.tone-2 {
  background: linear-gradient(#6e1f8f, #772384);
  fill: #772384;
}

.tone-3 {
  background: linear-gradient(#80277a, #862a70);
  fill: #862a70;
}

.tone-4 {
  background: linear-gradient(#902c66, #962d5d);
  fill: #962d5d;
}

.inline-key {
  position: relative;
  flex: none;
  width: calc(91% + 6px);
  height: 126px;
  margin: 0 0 -4px -3px;
  border-radius: 24px;
  background: linear-gradient(95deg, #39126f, #351b6e 45%, #3e2265 62%, #55324f 85%, #5c3548);
  font-size: 46px;
  font-weight: 500;
}

/* Composer */
.composer {
  flex: none;
  display: flex;
  flex-direction: column;
  align-items: center;
  border-top: 1px solid #343034;
  padding: 18px 30px 24px;
  background: #1c1c1c;
}

.tools {
  display: flex;
  align-items: center;
  width: 100%;
  margin-bottom: 81px;
}

.menu {
  display: flex;
  align-items: center;
  justify-content: center;
  gap: 24px;
  width: 264px;
  height: 99px;
  border-radius: 50px;
  background: #5a9bf9;
  font-size: 46px;
  font-weight: 500;
}

.clip {
  margin: 0 31px 0 33px;
}

.field {
  flex: 1;
  min-width: 0;
  display: flex;
  align-items: center;
  height: 99px;
  border: 3px solid #333;
  border-radius: 50px;
  padding: 0 20px 0 36px;
  background: #060606;
}

.field input {
  flex: 1;
  min-width: 0;
  border: 0;
  padding: 0;
  background: none;
  color: #fff;
  font: inherit;
  outline: 0;
}

.field input::placeholder {
  color: #7b7b7b;
  opacity: 1;
}

.mic {
  margin: 0 6px 0 34px;
}

.home-bar {
  width: 402px;
  height: 15px;
  border-radius: 8px;
  background: #fff;
}
```
